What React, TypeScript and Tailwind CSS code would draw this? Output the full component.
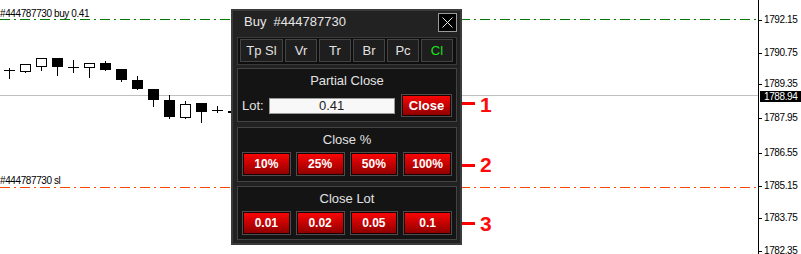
import { type ReactNode } from "react";

type Candle = { top: number; bottom: number; open: number; close: number; kind: "up" | "down" | "doji" };

// candle i sits at x = 4 + 16 * i
const candles: Candle[] = [
  { top: 68, bottom: 79, open: 70, close: 70, kind: "doji" },
  { top: 64, bottom: 73, open: 71, close: 64, kind: "up" },
  { top: 58, bottom: 71, open: 66, close: 58, kind: "up" },
  { top: 58, bottom: 76, open: 58, close: 67, kind: "down" },
  { top: 60, bottom: 73, open: 67, close: 67, kind: "doji" },
  { top: 63, bottom: 78, open: 67, close: 63, kind: "up" },
  { top: 61, bottom: 71, open: 63, close: 70, kind: "down" },
  { top: 69, bottom: 82, open: 69, close: 80, kind: "down" },
  { top: 76, bottom: 90, open: 80, close: 89, kind: "down" },
  { top: 89, bottom: 107, open: 89, close: 100, kind: "down" },
  { top: 95, bottom: 119, open: 100, close: 117, kind: "down" },
  { top: 101, bottom: 119, open: 117, close: 104, kind: "up" },
  { top: 103, bottom: 123, open: 103, close: 112, kind: "down" },
  { top: 106, bottom: 113, open: 110, close: 110, kind: "doji" },
  { top: 111, bottom: 113, open: 111, close: 113, kind: "down" },
];

const prices = [
  { label: "1792.15", y: 20 },
  { label: "1790.75", y: 53 },
  { label: "1789.35", y: 84 },
  { label: "1787.95", y: 118 },
  { label: "1786.55", y: 153 },
  { label: "1785.15", y: 186 },
  { label: "1783.75", y: 218 },
  { label: "1782.35", y: 251 },
];

const tabs = [
  { label: "Tp Sl", width: "w-[43px]", color: "text-[#e2e2e2]" },
  { label: "Vr", width: "w-[32px]", color: "text-[#e2e2e2]" },
  { label: "Tr", width: "w-[32px]", color: "text-[#e2e2e2]" },
  { label: "Br", width: "w-[32px]", color: "text-[#e2e2e2]" },
  { label: "Pc", width: "w-[32px]", color: "text-[#e2e2e2]" },
  { label: "Cl", width: "w-[32px]", color: "text-[#19e619]" },
];

const redButton =
  "flex items-center justify-center border border-[#4d4d4d] bg-linear-to-b from-[#ff0606] to-[#8c0000] font-bold text-white shadow-[inset_0_0_0_1px_#1a0000]";

function Section({ title, height, className, children }: { title: string; height: string; className: string; children: ReactNode }) {
  return (
    <div className={`${height} ${className} flex flex-col border border-[#434343] bg-[#141414] px-[4px]`}>
      <p className="h-[24px] text-center text-[13px] leading-[24px] text-[#e2e2e2]">{title}</p>
      {children}
    </div>
  );
}

function ChartLayer() {
  return (
    <svg className="absolute left-0 top-0" width={801} height={254} shapeRendering="crispEdges">
      <rect x={0} y={95} width={758} height={1} fill="#c0c0c0" />
      <rect x={758} y={0} width={1} height={254} fill="#000" />
      {prices.map((p) => (
        <rect key={p.label} x={759} y={p.y} width={3} height={1} fill="#000" />
      ))}
      {candles.map((c, i) => {
        const left = 4 + 16 * i;
        const bodyTop = Math.min(c.open, c.close);
        const bodyBottom = Math.max(c.open, c.close);
        return (
          <g key={i}>
            <rect x={left + 5} y={c.top} width={1} height={c.bottom - c.top} fill="#000" />
            {c.kind === "doji" && <rect x={left} y={c.open} width={11} height={1} fill="#000" />}
            {c.kind === "down" && <rect x={left} y={bodyTop} width={11} height={Math.max(bodyBottom - bodyTop, 1)} fill="#000" />}
            {c.kind === "up" && (
              <rect x={left + 0.5} y={bodyTop + 0.5} width={10} height={bodyBottom - bodyTop} fill="#fff" stroke="#000" />
            )}
          </g>
        );
      })}
    </svg>
  );
}

export default function App() {
  return (
    <div className="relative h-[254px] w-[801px] overflow-hidden bg-white font-['Liberation_Sans',Arial,sans-serif]">
      <ChartLayer />

      {/* order lines */}
      <div className="absolute left-0 top-[19px] h-px w-[756px] bg-[repeating-linear-gradient(90deg,#007a00_0_10px,transparent_10px_14px,#007a00_14px_16px,transparent_16px_20px)]" />
      <div className="absolute left-0 top-[187px] h-px w-[756px] bg-[repeating-linear-gradient(90deg,#ff4500_0_10px,transparent_10px_14px,#ff4500_14px_16px,transparent_16px_20px)]" />

      <p className="absolute left-0 top-[8px] text-[10px] leading-[12px] tracking-[-0.4px] text-black">#444787730 buy 0.41</p>
      <p className="absolute left-0 top-[175px] text-[10px] leading-[12px] tracking-[-0.4px] text-black">#444787730 sl</p>

      {prices.map((p) => (
        <p key={p.label} className="absolute left-[764px] text-[10px] leading-[12px] tracking-[-0.4px] text-black" style={{ top: p.y - 6 }}>
          {p.label}
        </p>
      ))}
      <div className="absolute left-[760px] top-[91px] flex h-[11px] w-[41px] items-center bg-black pl-[4px] text-[10px] leading-[11px] tracking-[-0.4px] text-white">
        1788.94
      </div>

      {/* trade panel */}
      <div className="absolute left-[231px] top-[9px] flex h-[236px] w-[231px] flex-col border-2 border-[#3b3b3b] bg-[#222222] pl-[4px] pr-[3px]">
        <header className="flex h-[26px] items-start justify-between">
          <h1 className="ml-[7px] whitespace-pre text-[13px] leading-[22px] text-[#e6e6e6]">Buy  #444787730</h1>
          <button type="button" className="mt-[2px] flex h-[19px] w-[19px] items-center justify-center border border-[#9a9a9a] bg-black">
            <svg width="11" height="11" viewBox="0 0 11 11">
              <path d="M0.5 0.5L10.5 10.5M10.5 0.5L0.5 10.5" stroke="#e6e6e6" strokeWidth="1" />
            </svg>
          </button>
        </header>

        <nav className="flex h-[28px] gap-[2px] border border-[#3a3a3a] bg-[#0e0e0e] px-[2px] pt-[1px]">
          {tabs.map((t) => (
            <button
              key={t.label}
              type="button"
              className={`${t.width} ${t.color} flex h-[23px] items-center justify-center border border-[#444444] bg-[#1e1e1e] text-[13px]`}
            >
              {t.label}
            </button>
          ))}
        </nav>

        <Section title="Partial Close" height="h-[54px]" className="mt-[3px]">
          <div className="mt-[1px] flex h-[23px] items-center">
            <span className="text-[13px] text-[#e2e2e2]">Lot:</span>
            <div className="ml-[5px] flex h-[16px] w-[126px] items-center justify-center border border-[#9a9a9a] bg-[#f8f8f8] text-[13px] text-[#222]">
              0.41
            </div>
            <button type="button" className={`${redButton} ml-auto h-[23px] w-[51px] text-[13px]`}>
              Close
            </button>
          </div>
        </Section>

        <Section title="Close %" height="h-[55px]" className="mt-[5px]">
          <div className="grid grid-cols-4 gap-[5px]">
            {["10%", "25%", "50%", "100%"].map((v) => (
              <button key={v} type="button" className={`${redButton} h-[24px] text-[12px]`}>
                {v}
              </button>
            ))}
          </div>
        </Section>

        <Section title="Close Lot" height="h-[54px]" className="mt-[4px]">
          <div className="grid grid-cols-4 gap-[5px]">
            {["0.01", "0.02", "0.05", "0.1"].map((v) => (
              <button key={v} type="button" className={`${redButton} h-[24px] text-[12px]`}>
                {v}
              </button>
            ))}
          </div>
        </Section>
      </div>

      {/* callouts */}
      {[
        { n: "1", line: 102, text: 94 },
        { n: "2", line: 164, text: 154 },
        { n: "3", line: 222, text: 213 },
      ].map((c) => (
        <div key={c.n}>
          <div className="absolute left-[462px] h-[3px] w-[13px] bg-[#ff0000]" style={{ top: c.line }} />
          <span className="absolute left-[480px] text-[21px] font-bold leading-none text-[#ff0a0a]" style={{ top: c.text }}>
            {c.n}
          </span>
        </div>
      ))}
    </div>
  );
}
